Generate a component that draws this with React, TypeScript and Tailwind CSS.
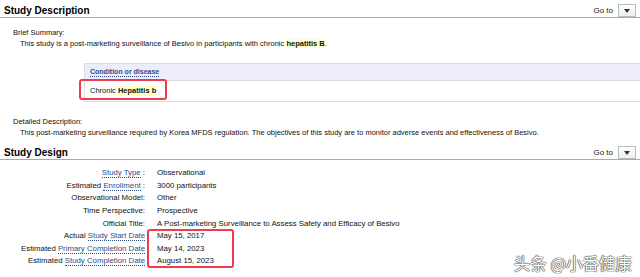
import React from 'react';

const GoTo = () => (
  <div className="flex items-center gap-[5px] text-[8px] text-[#222]">
    <span>Go to</span>
    <div className="w-[18px] h-[13px] border border-[#bbb] bg-gradient-to-b from-white to-[#eee] flex items-center justify-center">
      <svg width="6" height="4" viewBox="0 0 6 4">
        <path d="M0 0 L6 0 L3 4 Z" fill="#333" />
      </svg>
    </div>
  </div>
);

const SectionHeader = ({ title }: { title: string }) => (
  <div className="flex items-end justify-between h-[18px] border-b border-[#aaa] pl-[4px] pr-[4px] pb-[1px]">
    <h2 className="font-bold text-[10px] leading-[11px] text-black">{title}</h2>
    <div className="mb-[-1px]"><GoTo /></div>
  </div>
);

const Lnk = ({ children }: { children: React.ReactNode }) => (
  <span className="text-[#2a4d87] border-b border-dotted border-[#2a4d87]">{children}</span>
);

const rows: { label: React.ReactNode; value: string }[] = [
  { label: <><Lnk>Study Type</Lnk> :</>, value: 'Observational' },
  { label: <>Estimated <Lnk>Enrollment</Lnk> :</>, value: '3000 participants' },
  { label: <>Observational Model:</>, value: 'Other' },
  { label: <>Time Perspective:</>, value: 'Prospective' },
  { label: <>Official Title:</>, value: 'A Post-marketing Surveillance to Assess Safety and Efficacy of Besivo' },
  { label: <>Actual <Lnk>Study Start Date</Lnk></>, value: 'May 15, 2017' },
  { label: <>Estimated <Lnk>Primary Completion Date</Lnk></>, value: 'May 14, 2023' },
  { label: <>Estimated <Lnk>Study Completion Date</Lnk></>, value: 'August 15, 2023' },
];

export default function App() {
  return (
    <div className="w-[640px] h-[277px] bg-white relative overflow-hidden text-[7.5px] leading-[10px] text-[#111] font-['Liberation_Sans',Arial,sans-serif]">
      <SectionHeader title="Study Description" />

      <div className="pl-[13px] pt-[10px]">
        <p>Brief Summary:</p>
        <p className="pl-[7px] pt-[1px]">
          This study is a post-marketing surveillance of Besivo in participants with chronic{' '}
          <b className="bg-[#ffffc8]">hepatitis B</b>.
        </p>
      </div>

      <div className="ml-[84px] mt-[14px] border-y border-l border-[#ddd]">
        <div className="h-[17px] bg-[#ececfb] border-b border-[#ddd] flex items-center pl-[5px]">
          <span className="font-bold text-[7px] text-[#2a4d87] border-b border-dotted border-[#2a4d87] leading-[9px]">
            Condition or disease
          </span>
        </div>
        <div className="h-[20px] flex items-center pl-[5px] relative">
          <span>
            Chronic <b className="bg-[#ffffc8]">Hepatitis b</b>
          </span>
          <div className="absolute left-[-6px] top-[-2px] w-[88px] h-[21px] border-[2.5px] border-[#f23a4e] rounded-[3px]" />
        </div>
      </div>

      <div className="pl-[13px] pt-[15px]">
        <p>Detailed Description:</p>
        <p className="pl-[7px] pt-[1px]">
          This post-marketing surveillance required by Korea MFDS regulation. The objectives of this study are to monitor adverse events and effectiveness of Besivo.
        </p>
      </div>

      <div className="mt-[4px]">
        <SectionHeader title="Study Design" />
      </div>

      <div className="pt-[7px] relative text-[7.8px]">
        {rows.map((r, i) => (
          <div key={i} className="grid grid-cols-[145px_1fr] h-[12.6px] items-center">
            <div className="text-right whitespace-nowrap">{r.label}</div>
            <div className="pl-[12px]">{r.value}</div>
          </div>
        ))}
        <div className="absolute left-[147px] top-[69px] w-[87px] h-[39px] border-[2.5px] border-[#f23a4e] rounded-[3px]" />
      </div>

      <div className="absolute right-[8px] bottom-[4px] text-[16.5px] leading-[19px] text-white font-['Noto_Sans_CJK_SC',sans-serif] [text-shadow:0_0_1px_#333,0_0_1px_#333,0_0_1px_#333]">
        头条 @小番健康
      </div>
    </div>
  );
}
